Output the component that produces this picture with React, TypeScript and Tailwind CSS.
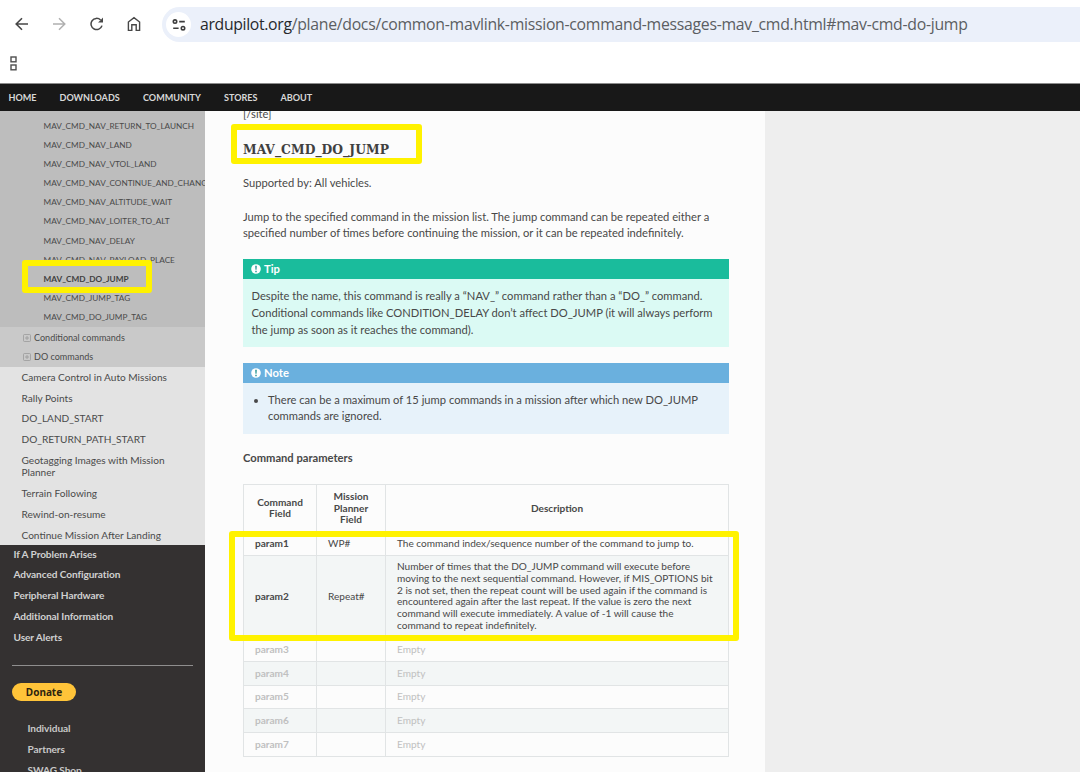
import type { ReactNode } from 'react';

const TOP_LINKS = [
    { label: 'HOME', width: 'w-[51px]' },
    { label: 'DOWNLOADS', width: 'w-[83.5px]' },
    { label: 'COMMUNITY', width: 'w-[81px]' },
    { label: 'STORES', width: 'w-[56.5px]' },
    { label: 'ABOUT', width: 'w-[60px]' },
];

const NAV_COMMANDS = [
    'MAV_CMD_NAV_RETURN_TO_LAUNCH',
    'MAV_CMD_NAV_LAND',
    'MAV_CMD_NAV_VTOL_LAND',
    'MAV_CMD_NAV_CONTINUE_AND_CHANGE_ALT',
    'MAV_CMD_NAV_ALTITUDE_WAIT',
    'MAV_CMD_NAV_LOITER_TO_ALT',
    'MAV_CMD_NAV_DELAY',
    'MAV_CMD_NAV_PAYLOAD_PLACE',
    'MAV_CMD_DO_JUMP',
    'MAV_CMD_JUMP_TAG',
    'MAV_CMD_DO_JUMP_TAG',
];

const MISSION_PAGES = [
    'Camera Control in Auto Missions',
    'Rally Points',
    'DO_LAND_START',
    'DO_RETURN_PATH_START',
    'Geotagging Images with Mission Planner',
    'Terrain Following',
    'Rewind-on-resume',
    'Continue Mission After Landing',
];

const SECTIONS = ['If A Problem Arises', 'Advanced Configuration', 'Peripheral Hardware', 'Additional Information', 'User Alerts'];

const EMPTY_PARAMS = [
    { name: 'param3', row: 'h-[24px]' },
    { name: 'param4', row: 'h-[24px] bg-[#f3f6f6]' },
    { name: 'param5', row: 'h-[23px]' },
    { name: 'param6', row: 'h-[24px] bg-[#f3f6f6]' },
    { name: 'param7', row: 'h-[24px]' },
];

function BrowserBar() {
    return (
        <header className="h-[84px] border-b border-[#8b8b8b] bg-white">
            <div className="flex h-[48px] items-center pl-[15px] text-[#474747]">
                <svg width="14" height="14" viewBox="0 0 14 14" fill="none" stroke="currentColor" strokeWidth="1.6">
                    <path d="M13 7H1.4M7 1.2L1.2 7L7 12.8" />
                </svg>
                <svg className="ml-[23px] text-[#b0b0b0]" width="14" height="14" viewBox="0 0 14 14" fill="none" stroke="currentColor" strokeWidth="1.5">
                    <path d="M1 7H12.6M7 1.2L12.8 7L7 12.8" />
                </svg>
                <svg className="ml-[24px]" width="14" height="14" viewBox="0 0 14 14" fill="none" stroke="currentColor" strokeWidth="1.5">
                    <path d="M12 8.6A5.6 5.6 0 1 1 10.6 3" />
                    <path d="M13 .6V5.6H8L10.2 3.4Z" fill="currentColor" stroke="none" />
                </svg>
                <svg className="ml-[23px]" width="14" height="16" viewBox="0 0 14 16" fill="none" stroke="currentColor" strokeWidth="1.4">
                    <path d="M1.4 6L7 1.7L12.6 6V14.4H9.2V8.8H4.8V14.4H1.4Z" />
                </svg>
                <div className="ml-[21px] flex h-[35px] flex-1 items-center rounded-l-full bg-[#ebf0fa] pl-[4px] mt-[1px]">
                    <div className="flex size-[25px] items-center justify-center rounded-full bg-white">
                        <svg width="14" height="14" viewBox="0 0 14 14" fill="none" stroke="#3c3c3c" strokeWidth="1.6">
                            <circle cx="3" cy="3.6" r="1.7" />
                            <path d="M7.2 3.6H12.8M1.2 10.2H6.6" />
                            <circle cx="11" cy="10.2" r="1.7" />
                        </svg>
                    </div>
                    <div className="ml-[9px] whitespace-nowrap pt-px font-['Open_Sans','Noto_Sans',sans-serif] text-[15.8px] tracking-[-0.28px] text-[#5b5e62]">
                        <span className="tracking-[-0.34px] text-[#26282c]">ardupilot.org</span>/plane/docs/common-mavlink-mission-command-messages-mav_cmd.html#mav-cmd-do-jump
                    </div>
                </div>
            </div>
            <svg className="ml-[10px] mt-[8px]" width="7" height="15" viewBox="0 0 7 15" fill="none" stroke="#4f4f4f" strokeWidth="1.4">
                <rect x="1" y="1" width="5" height="4.8" />
                <rect x="1" y="9" width="5" height="4.8" />
            </svg>
        </header>
    );
}

function Expander() {
    return (
        <svg className="mr-[3px] shrink-0" width="8" height="8" viewBox="0 0 8 8" fill="none" stroke="#9a9a9a" strokeWidth="0.8">
            <rect x=".5" y=".5" width="7" height="7" rx="1" />
            <path d="M4 2V6M2 4H6" />
        </svg>
    );
}

function Sidebar() {
    return (
        <aside className="flex w-[205px] shrink-0 flex-col overflow-hidden bg-[#343131] text-[10.1px] text-[#4a4a4a]">
            <div className="h-[216px] shrink-0 bg-[#bdbdbd] pl-[43.5px] pt-[6px] text-[8.23px]">
                {NAV_COMMANDS.map(name => (
                    <div key={name} className={`h-[19.1px] whitespace-nowrap leading-[19px] ${name === 'MAV_CMD_DO_JUMP' ? 'font-bold text-[#404040]' : ''}`}>
                        {name}
                    </div>
                ))}
            </div>
            <div className="h-[40px] shrink-0 bg-[#c9c9c9] pl-[23px] pt-px text-[9.05px]">
                <div className="flex h-[19.5px] items-center"><Expander />Conditional commands</div>
                <div className="flex h-[18.5px] items-center"><Expander />DO commands</div>
            </div>
            <div className="h-[178px] shrink-0 bg-[#e3e3e3] pl-[21.5px] pr-[30px]">
                {MISSION_PAGES.map(page => (
                    <div key={page} className="pb-[4.5px] pt-[3.85px] leading-[12.4px]">{page}</div>
                ))}
            </div>
            <div className="mt-[-0.5px] shrink-0 pl-[13.5px] font-bold text-[#d0d0d0]">
                {SECTIONS.map(section => (
                    <div key={section} className="h-[20.8px] leading-[19.4px] tracking-[-0.09px]">{section}</div>
                ))}
            </div>
            <div className="ml-[12px] mt-[16.5px] h-px w-[181px] shrink-0 bg-[#8f8e8e]" />
            <div className="ml-[12px] mt-[17px] flex h-[18px] w-[64px] shrink-0 items-center justify-center rounded-full bg-[#ffc439] pt-px font-['Noto_Sans',sans-serif] text-[10px] font-bold text-[#2d2410]">
                Donate
            </div>
            <div className="mt-[18px] shrink-0 pl-[27.5px] font-bold text-[#c8c8c8]">
                {['Individual', 'Partners', 'SWAG Shop'].map(link => (
                    <div key={link} className="h-[20.8px] leading-[19.4px] tracking-[-0.08px]">{link}</div>
                ))}
            </div>
        </aside>
    );
}

function AdmonitionTitle({ className, children }: { className: string; children: ReactNode }) {
    return (
        <div className={`flex h-[20px] items-center pl-[8px] text-[11.2px] font-bold text-white ${className}`}>
            <svg className="mr-[3px]" width="10" height="10" viewBox="0 0 10 10">
                <circle cx="5" cy="5" r="4.8" fill="white" />
                <path d="M4.1 1.8H5.9L5.6 5.8H4.4ZM4.2 6.7H5.8V8.2H4.2Z" fill="#3a9f9f" />
            </svg>
            {children}
        </div>
    );
}

function ParamTable() {
    const cell = 'border border-[#e1e4e5] px-[11px] py-0';
    return (
        <table className="mt-[17px] w-[486px] table-fixed border-collapse text-[10.07px] leading-[11.75px]">
            <colgroup>
                <col className="w-[73px]" />
                <col className="w-[69px]" />
                <col />
            </colgroup>
            <thead>
                <tr className="h-[47px] text-center">
                    <th className={`${cell} pt-px`}>Command Field</th>
                    <th className={`${cell} pt-px`}>Mission Planner Field</th>
                    <th className={`${cell} pt-px`}>Description</th>
                </tr>
            </thead>
            <tbody>
                <tr className="h-[24px]">
                    <td className={`${cell} font-bold`}>param1</td>
                    <td className={cell}>WP#</td>
                    <td className={cell}>The command index/sequence number of the command to jump to.</td>
                </tr>
                <tr className="h-[82px] bg-[#f3f6f6]">
                    <td className={`${cell} font-bold`}>param2</td>
                    <td className={cell}>Repeat#</td>
                    <td className={`${cell} whitespace-nowrap`}>
                        Number of times that the DO_JUMP command will execute before<br />
                        moving to the next sequential command. However, if MIS_OPTIONS bit<br />
                        2 is not set, then the repeat count will be used again if the command is<br />
                        encountered again after the last repeat. If the value is zero the next<br />
                        command will execute immediately. A value of -1 will cause the<br />
                        command to repeat indefinitely.
                    </td>
                </tr>
                {EMPTY_PARAMS.map(param => (
                    <tr key={param.name} className={`text-[#c0c0c0] ${param.row}`}>
                        <td className={`${cell} font-bold`}>{param.name}</td>
                        <td className={cell} />
                        <td className={cell}>Empty</td>
                    </tr>
                ))}
            </tbody>
        </table>
    );
}

export default function App() {
    return (
        <div className="relative flex h-[772px] w-[1080px] flex-col overflow-hidden bg-[#eeeeee] font-[Lato,sans-serif] text-[#484848]">
            <BrowserBar />

            <nav className="flex h-[27px] shrink-0 items-center bg-[#181818] pl-[8.5px] text-[9.05px] font-bold text-[#d8d8d8]">
                {TOP_LINKS.map(link => (
                    <span key={link.label} className={link.width}>{link.label}</span>
                ))}
            </nav>

            <div className="flex min-h-0 flex-1">
                <Sidebar />

                <main className="w-[560px] shrink-0 overflow-hidden bg-[#fcfcfc] pl-[38px] text-[11.18px] leading-[16.8px]">
                    <p className="mt-[-5px]">[/site]</p>
                    <h2 className="mt-[12px] h-[29px] font-['DejaVu_Serif_Condensed','DejaVu_Serif',serif] text-[13.7px] font-bold leading-[28px] tracking-[0.05px] text-[#404040]">
                        MAV_CMD_DO_JUMP
                    </h2>
                    <p className="mt-[11px]">Supported by: All vehicles.</p>
                    <p className="mt-[17px] whitespace-nowrap">
                        Jump to the specified command in the mission list. The jump command can be repeated either a<br />
                        specified number of times before continuing the mission, or it can be repeated indefinitely.
                    </p>

                    {/* Tip */}
                    <section className="mt-[17px] h-[88px] w-[486px] bg-[#dbfaf4]">
                        <AdmonitionTitle className="bg-[#1abc9c]">Tip</AdmonitionTitle>
                        <p className="whitespace-nowrap pl-[8.5px] pt-[9px]">
                            Despite the name, this command is really a “NAV_” command rather than a “DO_” command.<br />
                            Conditional commands like CONDITION_DELAY don’t affect DO_JUMP (it will always perform<br />
                            the jump as soon as it reaches the command).
                        </p>
                    </section>

                    {/* Note */}
                    <section className="mt-[16px] h-[71px] w-[486px] bg-[#e7f2fa]">
                        <AdmonitionTitle className="bg-[#6ab0de]">Note</AdmonitionTitle>
                        <ul className="list-disc whitespace-nowrap pl-[25px] pt-[8.5px]">
                            <li>
                                There can be a maximum of 15 jump commands in a mission after which new DO_JUMP<br />
                                commands are ignored.
                            </li>
                        </ul>
                    </section>

                    <p className="mt-[16px] font-bold">Command parameters</p>
                    <ParamTable />
                </main>
            </div>

            {/* Highlight frames */}
            <div className="absolute left-[231px] top-[124px] h-[40px] w-[191px] rounded-[3px] border-[6px] border-[#fff200]" />
            <div className="absolute left-[22px] top-[260px] h-[33px] w-[130px] rounded-[3px] border-[6px] border-[#fff200]" />
            <div className="absolute left-[229px] top-[531px] h-[110px] w-[510px] rounded-[3px] border-[6px] border-[#fff200]" />
        </div>
    );
}
